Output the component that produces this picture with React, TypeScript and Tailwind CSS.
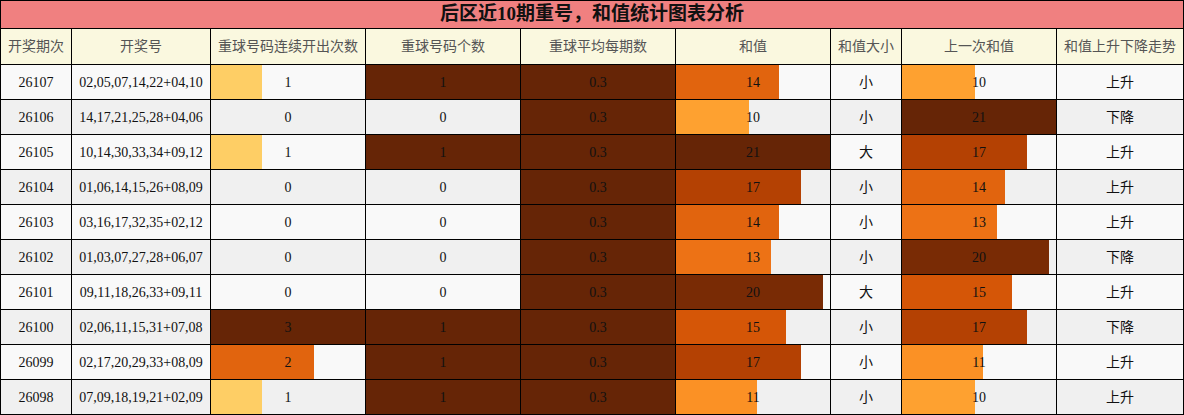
import React from 'react';

// One row of the table
type Row = {
  issue: string;
  numbers: string;
  repeatRun: number;
  repeatCount: number;
  avg: number;
  sum: number;
  size: string;
  prevSum: number;
  trend: string;
};

const rows: Row[] = [
  { issue: '26107', numbers: '02,05,07,14,22+04,10', repeatRun: 1, repeatCount: 1, avg: 0.3, sum: 14, size: '小', prevSum: 10, trend: '上升' },
  { issue: '26106', numbers: '14,17,21,25,28+04,06', repeatRun: 0, repeatCount: 0, avg: 0.3, sum: 10, size: '小', prevSum: 21, trend: '下降' },
  { issue: '26105', numbers: '10,14,30,33,34+09,12', repeatRun: 1, repeatCount: 1, avg: 0.3, sum: 21, size: '大', prevSum: 17, trend: '上升' },
  { issue: '26104', numbers: '01,06,14,15,26+08,09', repeatRun: 0, repeatCount: 0, avg: 0.3, sum: 17, size: '小', prevSum: 14, trend: '上升' },
  { issue: '26103', numbers: '03,16,17,32,35+02,12', repeatRun: 0, repeatCount: 0, avg: 0.3, sum: 14, size: '小', prevSum: 13, trend: '上升' },
  { issue: '26102', numbers: '01,03,07,27,28+06,07', repeatRun: 0, repeatCount: 0, avg: 0.3, sum: 13, size: '小', prevSum: 20, trend: '下降' },
  { issue: '26101', numbers: '09,11,18,26,33+09,11', repeatRun: 0, repeatCount: 0, avg: 0.3, sum: 20, size: '大', prevSum: 15, trend: '上升' },
  { issue: '26100', numbers: '02,06,11,15,31+07,08', repeatRun: 3, repeatCount: 1, avg: 0.3, sum: 15, size: '小', prevSum: 17, trend: '下降' },
  { issue: '26099', numbers: '02,17,20,29,33+08,09', repeatRun: 2, repeatCount: 1, avg: 0.3, sum: 17, size: '小', prevSum: 11, trend: '上升' },
  { issue: '26098', numbers: '07,09,18,19,21+02,09', repeatRun: 1, repeatCount: 1, avg: 0.3, sum: 11, size: '小', prevSum: 10, trend: '上升' },
];

const headers = [
  '开奖期次',
  '开奖号',
  '重球号码连续开出次数',
  '重球号码个数',
  '重球平均每期数',
  '和值',
  '和值大小',
  '上一次和值',
  '和值上升下降走势',
];

// YlOrBr colour stops, t from 0 to 1
const stops = ['#ffffe5', '#fff7bc', '#fee391', '#fec44f', '#fe9929', '#ec7014', '#cc4c02', '#993404', '#662506'];

const hex = (h: string) => [1, 3, 5].map((i) => parseInt(h.slice(i, i + 2), 16));

const ylOrBr = (t: number) => {
  const x = Math.max(0, Math.min(1, t)) * (stops.length - 1);
  const i = Math.min(stops.length - 2, Math.floor(x));
  const f = x - i;
  const a = hex(stops[i]);
  const b = hex(stops[i + 1]);
  const c = a.map((v, k) => Math.round(v + (b[k] - v) * f));
  return `rgb(${c[0]},${c[1]},${c[2]})`;
};

// Cell with a data bar behind the number
const BarCell = ({ value, max, bg }: { value: number; max: number; bg: string }) => {
  const t = max > 0 ? value / max : 0;
  return (
    <div className={`relative h-[34px] ${bg}`}>
      {value > 0 && (
        <div
          className="absolute left-0 top-0 h-full"
          style={{ width: `${t * 100}%`, backgroundColor: ylOrBr(t) }}
        />
      )}
      <div className="relative flex h-full items-center justify-center text-[14px] text-[#111]">
        {value}
      </div>
    </div>
  );
};

const TextCell = ({ children, bg }: { children: React.ReactNode; bg: string }) => (
  <div className={`flex h-[34px] items-center justify-center text-[14px] text-[#111] ${bg}`}>
    {children}
  </div>
);

export default function App() {
  const maxRun = Math.max(...rows.map((r) => r.repeatRun));
  const maxCount = Math.max(...rows.map((r) => r.repeatCount));
  const maxAvg = Math.max(...rows.map((r) => r.avg));
  const maxSum = Math.max(...rows.map((r) => Math.max(r.sum, r.prevSum)));

  return (
    <div className="w-[1184px] bg-white font-['Liberation_Serif','Noto_Sans_CJK_SC',serif]">
      <div className="grid grid-cols-[70px_138px_154px_154px_154px_154px_70px_154px_126px] gap-px border border-black bg-black">
        {/* Title */}
        <div className="col-span-9 flex h-[27px] items-center justify-center bg-[#f08080] text-[19px] font-bold text-[#111]">
          后区近10期重号，和值统计图表分析
        </div>

        {/* Header row */}
        {headers.map((h) => (
          <div
            key={h}
            className="flex h-[35px] items-center justify-center bg-[#faf8df] text-[14px] text-[#555]"
          >
            {h}
          </div>
        ))}

        {/* Data rows */}
        {rows.map((r, i) => {
          const bg = i % 2 === 0 ? 'bg-[#f9f9f9]' : 'bg-[#f0f0f0]';
          return (
            <React.Fragment key={r.issue}>
              <TextCell bg={bg}>{r.issue}</TextCell>
              <TextCell bg={bg}>{r.numbers}</TextCell>
              <BarCell value={r.repeatRun} max={maxRun} bg={bg} />
              <BarCell value={r.repeatCount} max={maxCount} bg={bg} />
              <BarCell value={r.avg} max={maxAvg} bg={bg} />
              <BarCell value={r.sum} max={maxSum} bg={bg} />
              <TextCell bg={bg}>{r.size}</TextCell>
              <BarCell value={r.prevSum} max={maxSum} bg={bg} />
              <TextCell bg={bg}>{r.trend}</TextCell>
            </React.Fragment>
          );
        })}
      </div>
    </div>
  );
}
